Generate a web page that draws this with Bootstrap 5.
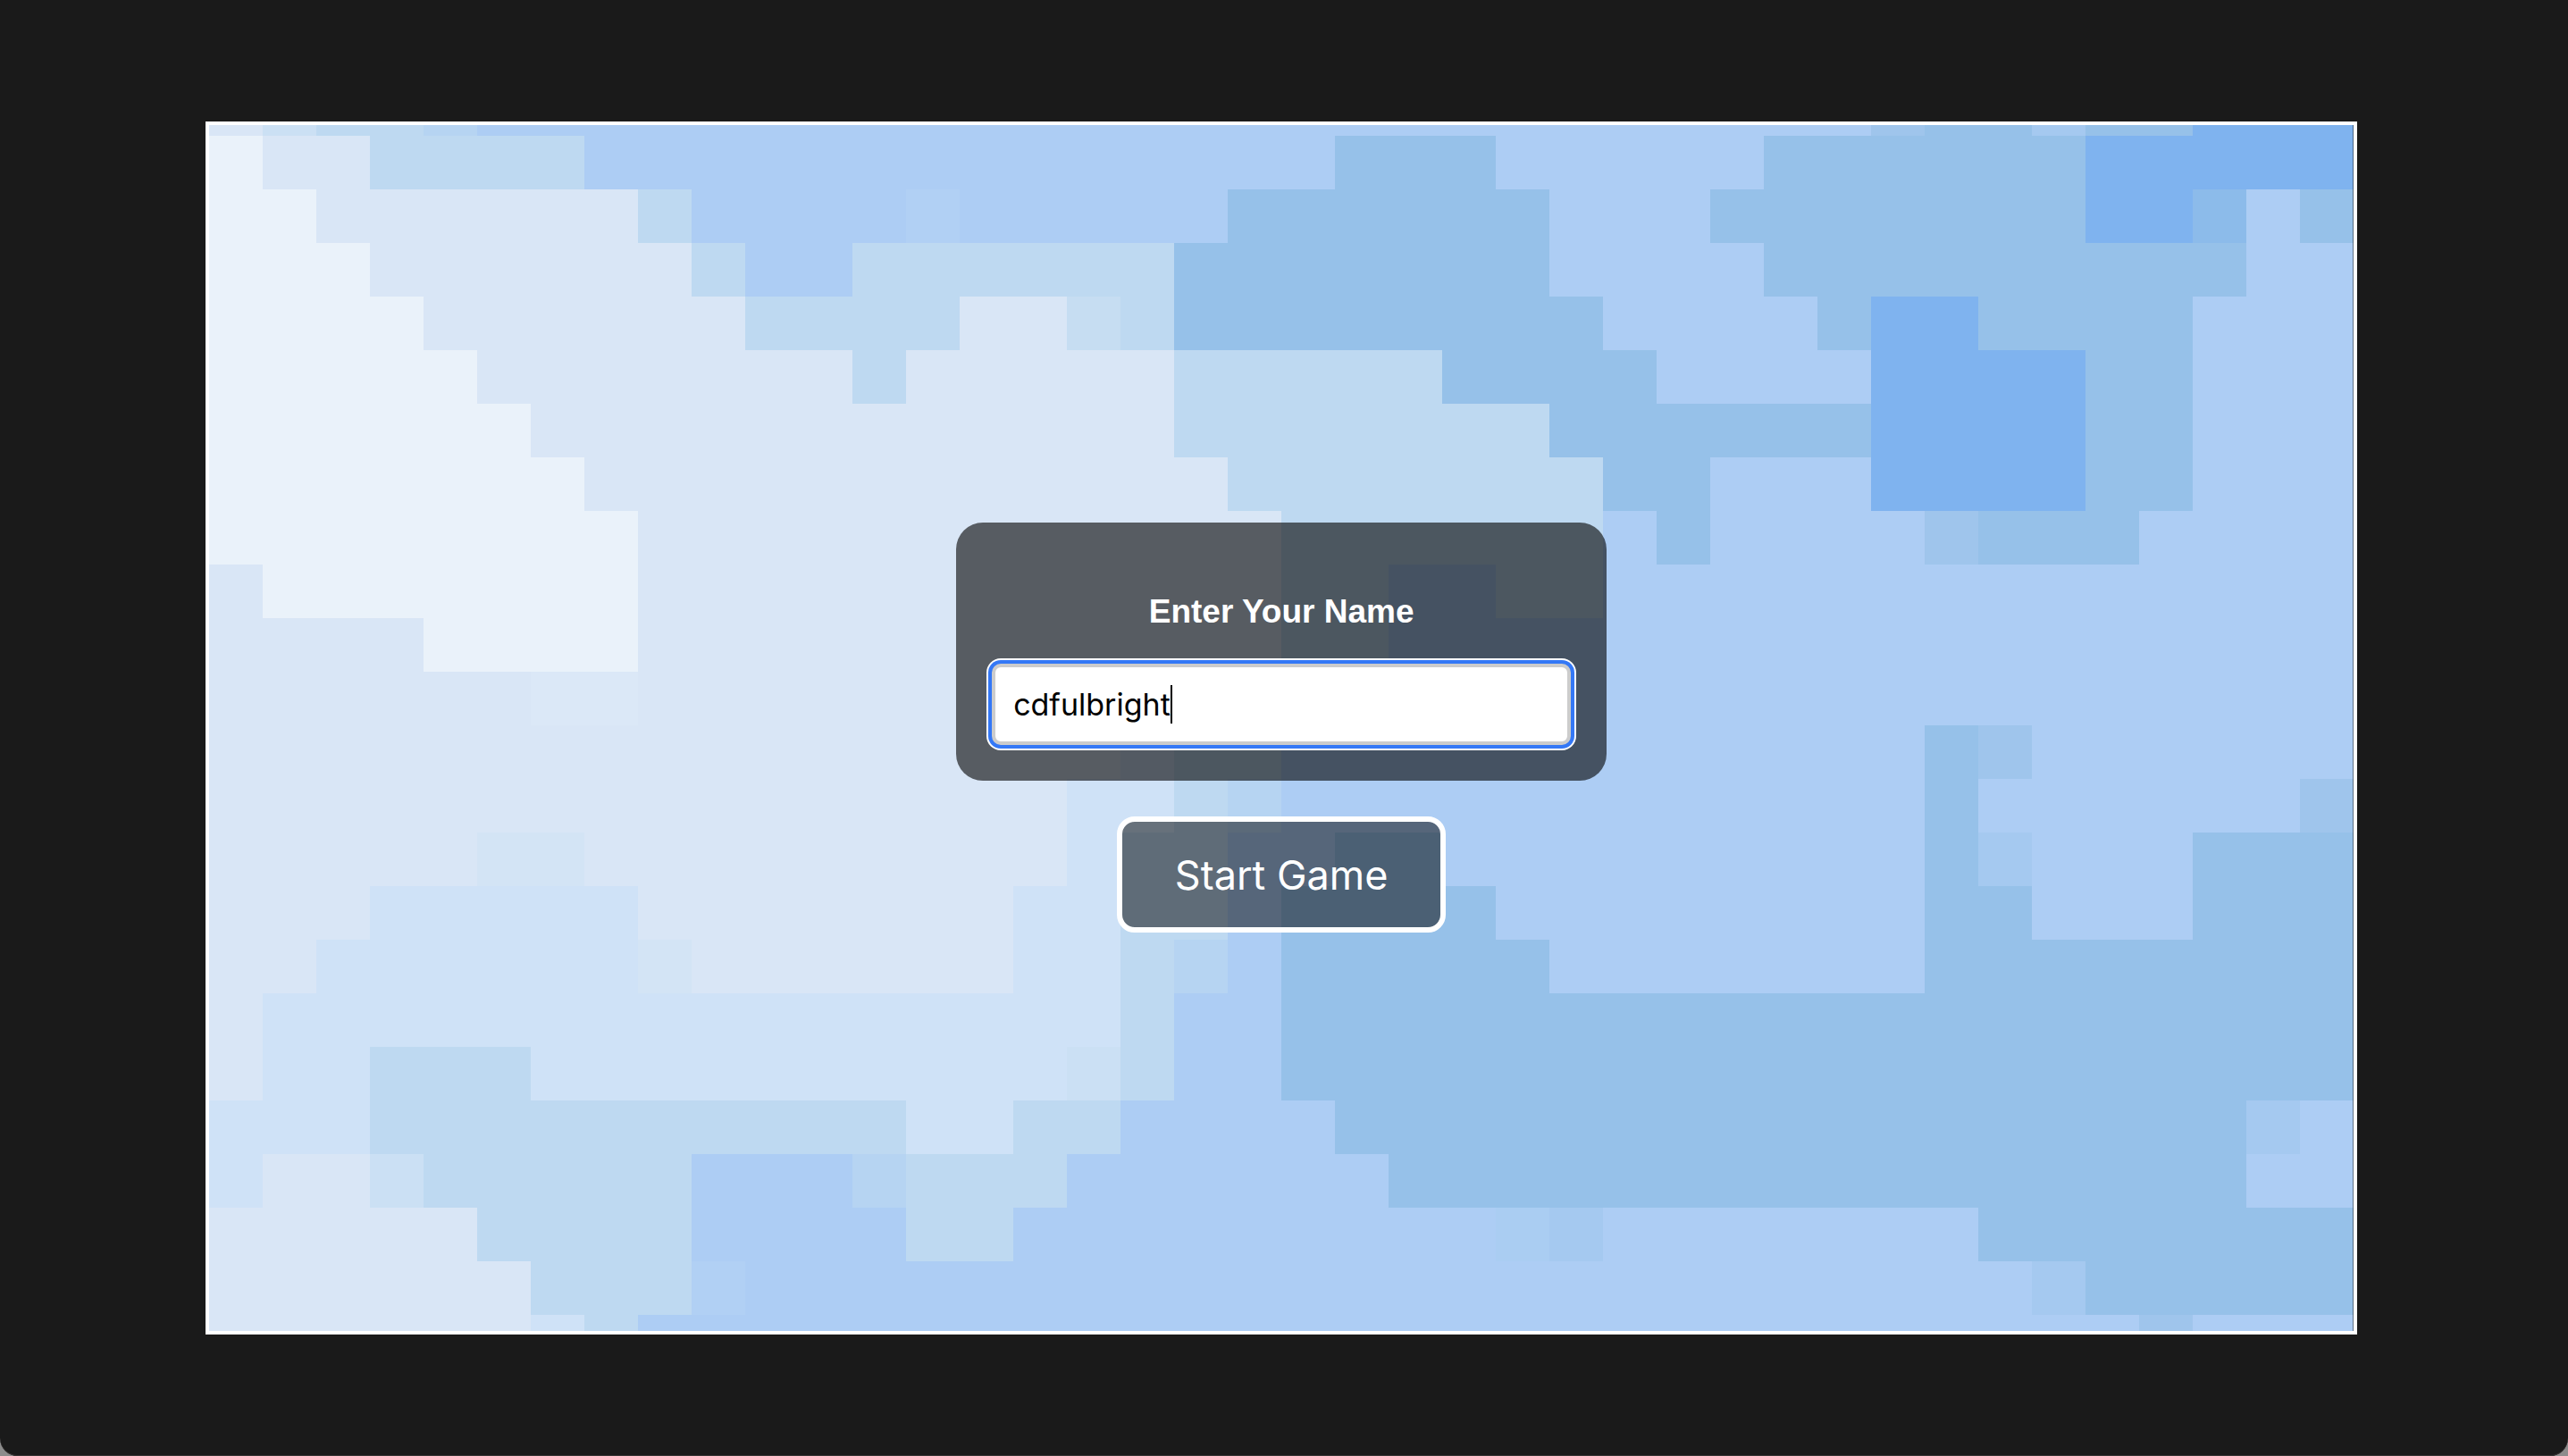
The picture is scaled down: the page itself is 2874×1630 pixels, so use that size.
<!DOCTYPE html>
<html lang="en">
<head>
<meta charset="utf-8">
<meta name="viewport" content="width=device-width, initial-scale=1">
<title>Start Game</title>
<link rel="stylesheet" href="https://cdn.jsdelivr.net/npm/bootstrap@5.3.0/dist/css/bootstrap.min.css">
<style>
  html { background: #8c8c8c; }
  body { background: #1a1a1a; font-family: Inter, Roboto, sans-serif; border-radius: 0 0 20px 20px; box-shadow: inset 0 -1px 0 #383434; }
  .stage { padding: 0 8.2% 0 8%; }
  .game-frame { aspect-ratio: 2408 / 1358; border: 4px solid #fff; }
  .sky { inset: 0; }
  .name-panel { width: 728px; padding: 40px; border-radius: 30px; background: rgba(0, 0, 0, .6); }
  .name-title { font: bold 37px/43px "Liberation Sans", Arial, sans-serif; margin: 38px 0 37px; }
  .name-input, .name-input:focus {
    height: 91px; padding: 0 20px; font-size: 34px; color: #000; background: #fff;
    border: 4px solid #ccc; border-radius: 10px;
    box-shadow: 0 0 0 4px #3478f6, 0 0 0 6px #fff; caret-color: transparent;
  }
  .caret { width: 2px; height: 43px; left: 200px; top: 24px; background: #000; }
  .start-btn, .start-btn:hover {
    padding: 31px 59px 29px; font-size: 45px; line-height: 58px; color: #fff;
    border: 6px solid #fff; border-radius: 20px; background: rgba(0, 0, 0, .5);
  }
  .stack { gap: 40px; }
</style>
<script src="https://cdn.jsdelivr.net/npm/bootstrap@5.3.0/dist/js/bootstrap.bundle.min.js"></script>
</head>
<body>
<main class="stage min-vh-100 d-flex align-items-center">
  <section class="game-frame position-relative w-100 d-flex align-items-center justify-content-center">
    <svg id="sky" class="sky position-absolute w-100 h-100" viewBox="0 0 2400 1350" preserveAspectRatio="none" shape-rendering="crispEdges" aria-hidden="true"></svg>
    <form class="stack position-relative d-flex flex-column align-items-center" onsubmit="return false">
      <div class="name-panel">
        <label for="player" class="name-title d-block text-center text-white">Enter Your Name</label>
        <div class="position-relative">
          <input id="player" type="text" class="name-input form-control" value="cdfulbright" autocomplete="off" spellcheck="false">
          <span class="caret position-absolute"></span>
        </div>
      </div>
      <button type="submit" class="start-btn btn">Start Game</button>
    </form>
  </section>
</main>
<script>
  // Sky tiles: one letter per 60px tile, drawn as horizontal runs of one colour.
  const tones = {
    A: '#eaf2fa', a: '#dbe8f7', B: '#d9e6f6', b: '#d3e4f5', C: '#cfe2f7', c: '#cbe0f4',
    k: '#c6ddf2', D: '#bed9f1', d: '#b6d4f2', e: '#b1d0f4', E: '#adcdf4', i: '#aacdf2',
    f: '#a5c9f0', h: '#9fc5ec', F: '#96c1e9', g: '#8cbbea', G: '#7fb3ef'
  };
  const rows = [
    'B1c1D2d1E26h1F2f1F2G3',
    'A1B2D4E14F3E5F6G5',
    'A2B6D1E4e1E5F6E3F7G2g1E1F1',
    'A3B6D1E2D6F7E4F9E2',
    'A4B6D4B2k1D1F8E4F1G2F4E3',
    'A5B7D1B5D5F4E4G4F2E3',
    'A6B12D7F6G4F2E3',
    'A7B12D7F2E3G4F2E3',
    'A8B12D6E1F1E4h1F3E4',
    'B1A7B12D2E2D2E14',
    'B4A4B12D2E18',
    'B6a2B12E20',
    'B17C1D2E12F1h1E6',
    'B16C2D1d1E12F1E6h1',
    'B5b2B9C1D2E2F2E9F1f1E3F3',
    'B3C5B7C2D2E1F4E8F2E3F3',
    'B2C6b1B6C2D1d1E1F5E7F8',
    'B1C16D1E2F20',
    'B1C2D3C10c1D1E2F20',
    'C3D10C2D2E4F17f1E1',
    'C1B2c1D5E3d1D3E6F16E2',
    'B5D4E4D2E9i1f1E7F7',
    'B6D3e1E24f1F5',
    'B6C1D1E28h1E3'
  ];
  let out = '';
  rows.forEach((row, r) => {
    const y = r ? 60 * r - 48 : 0;
    const h = r ? Math.min(60, 1350 - y) : 12;
    let x = 0;
    for (const [, tone, n] of row.matchAll(/([A-Za-z])(\d+)/g)) {
      out += `<rect x="${x}" y="${y}" width="${n * 60}" height="${h}" fill="${tones[tone]}"/>`;
      x += n * 60;
    }
  });
  out += '<rect x="2399" y="0" width="1" height="1350" fill="#1a1a1a" opacity=".5"/>';
  document.getElementById('sky').innerHTML = out;
</script>
</body>
</html>
